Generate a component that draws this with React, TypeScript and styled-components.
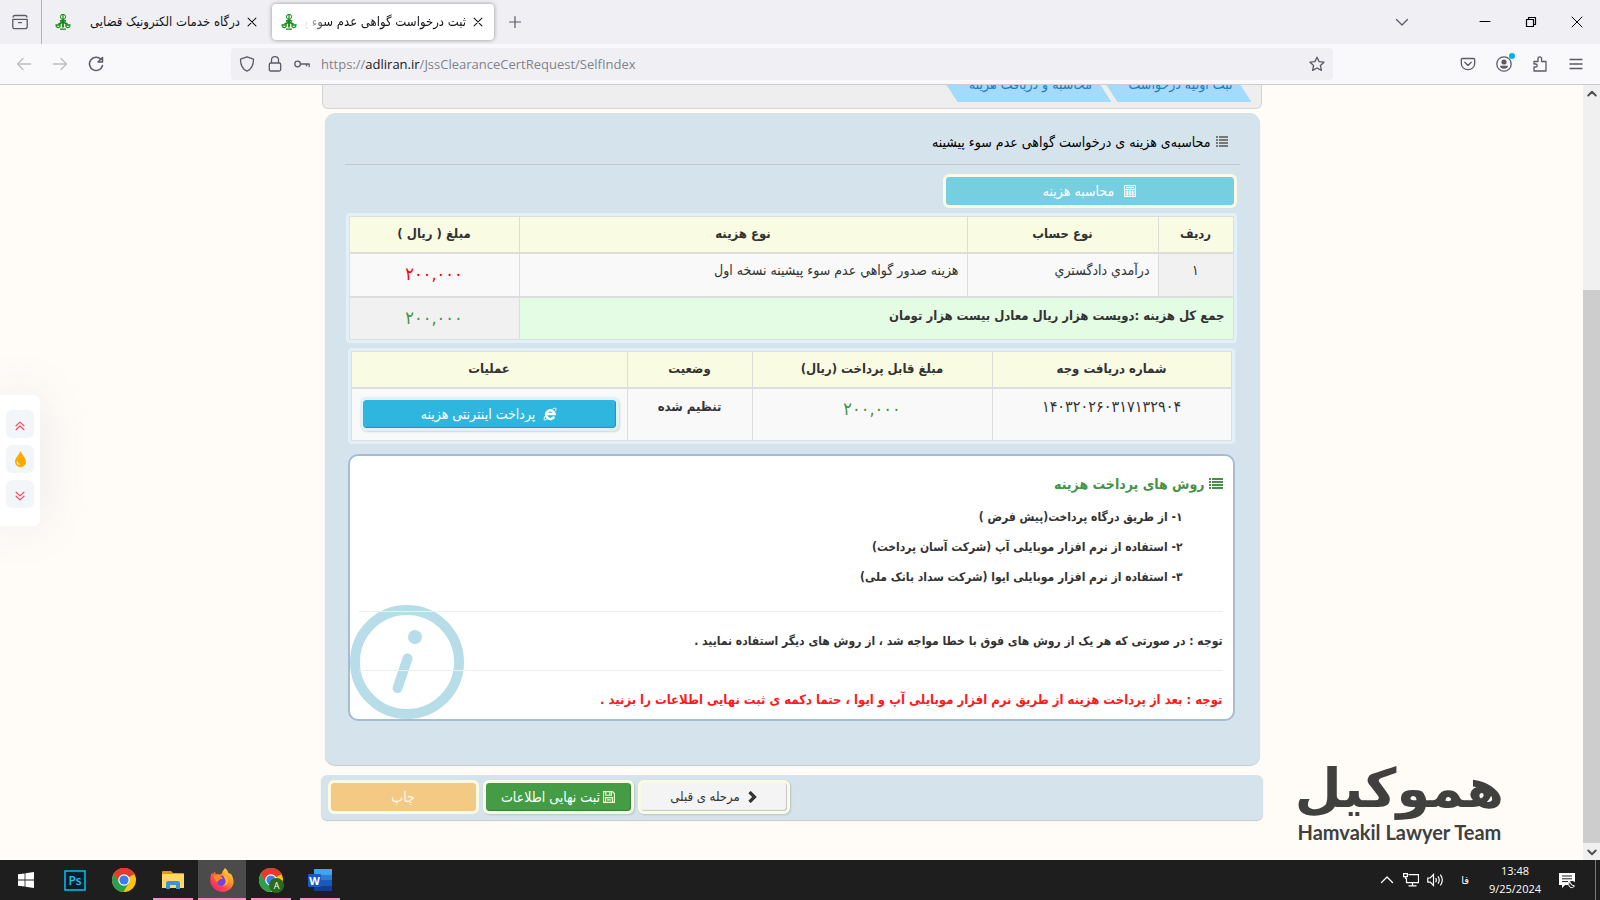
import React from "react";
import styled, { createGlobalStyle, css } from "styled-components";

const FA = `"DejaVu Sans Condensed", "DejaVu Sans", sans-serif`;
const UI = `"Open Sans", "Noto Sans", sans-serif`;

const Global = createGlobalStyle`
  *, *::before, *::after { box-sizing: border-box; }
  html, body { margin: 0; padding: 0; overflow: hidden; }
  body { font-family: ${FA}; color: #333; }
  button { font-family: inherit; cursor: pointer; }
  svg { display: block; flex: none; }
`;

const Screen = styled.div`
  display: flex;
  flex-direction: column;
  height: 100vh;
`;

/* Browser chrome */
const TabStrip = styled.header`
  display: flex;
  align-items: center;
  height: 44px;
  background: #f0f0f4;
  color: #15141a;
`;
const IconButton = styled.button<{ $w?: number; $dim?: boolean }>`
  display: flex;
  align-items: center;
  justify-content: center;
  width: ${(p) => p.$w ?? 36}px;
  height: 32px;
  padding: 0;
  border: 0;
  background: none;
  color: ${(p) => (p.$dim ? "#bdbdc2" : "#5b5b66")};
`;
const ViewCell = styled.div`
  display: flex;
  align-items: center;
  height: 44px;
  padding: 0 3px 0 2px;
  border-right: 1px solid #b4b4bb;
`;
const Tab = styled.div<{ $active?: boolean }>`
  display: flex;
  align-items: center;
  gap: 2px;
  width: 222px;
  height: 36px;
  margin-left: 4px;
  padding: 0 6px 0 9px;
  border-radius: 4px;
  ${(p) => p.$active && css`background: #fff; box-shadow: 0 0 4px rgba(0, 0, 0, 0.4);`}
`;
const TabTitle = styled.span<{ $fade?: boolean }>`
  flex: 1;
  min-width: 0;
  margin-left: 4px;
  overflow: hidden;
  white-space: nowrap;
  direction: rtl;
  font-size: 13px;
  line-height: 20px;
  ${(p) => p.$fade && css`mask-image: linear-gradient(to right, transparent, #000 24px);`}
`;
const CloseButton = styled(IconButton)`
  width: 20px;
  height: 20px;
  color: #15141a;
`;
const Spacer = styled.div<{ $w?: number }>`
  flex: ${(p) => (p.$w ? `0 0 ${p.$w}px` : "1")};
`;
const WindowButton = styled(IconButton)`
  width: 46px;
  color: #000;
`;
const NavBar = styled.div`
  display: flex;
  align-items: center;
  height: 41px;
  padding: 0 6px;
  background: #f9f9fb;
  border-bottom: 1px solid #cccccf;
`;
const UrlBox = styled.form`
  display: flex;
  align-items: center;
  flex: 1;
  height: 32px;
  margin: 0 117px;
  padding: 0 2px;
  border-radius: 4px;
  background: #f0f0f4;
`;
const UrlField = styled.label`
  display: grid;
  flex: 1;
  margin-left: 6px;
  font-family: ${UI};
  font-size: 13px;
  line-height: 24px;
  color: #82828a;
`;
const UrlText = styled.span`
  grid-area: 1 / 1;
  b { font-weight: 400; color: #15141a; }
`;
const UrlInput = styled.input`
  grid-area: 1 / 1;
  width: 100%;
  padding: 0;
  border: 0;
  outline: 0;
  background: none;
  font: inherit;
  color: transparent;
`;
const Badge = styled.span`
  position: relative;
  &::after {
    content: "";
    position: absolute;
    top: -3px;
    right: -3px;
    width: 6px;
    height: 6px;
    border-radius: 50%;
    background: #00b3f4;
  }
`;

/* Page */
const Viewport = styled.div`
  position: relative;
  display: flex;
  flex: 1;
  min-height: 0;
  background: #fffcf8;
`;
const Page = styled.main`
  flex: 1;
  min-width: 0;
  overflow: hidden;
  direction: rtl;
`;
const Wrap = styled.div`
  max-width: 942px;
  margin: 0 auto;
`;
const Steps = styled.nav`
  display: flex;
  align-items: flex-end;
  height: 24px;
  margin: 0 1px;
  padding: 0 9px 6px;
  overflow: hidden;
  border: 1px solid #d6d6d6;
  border-top: 0;
  border-radius: 0 0 6px 6px;
  background: #eee;
`;
const Step = styled.a<{ $wide?: boolean }>`
  flex: none;
  width: ${(p) => (p.$wide ? 176 : 156)}px;
  height: 34px;
  margin-left: -16px;
  padding-left: 14px;
  clip-path: polygon(0 0, calc(100% - 22px) 0, 100% 100%, 22px 100%);
  background: #a4dafd;
  color: #1c80bd;
  font-size: 14px;
  line-height: 32px;
  text-align: center;
  text-decoration: none;
`;
const Panel = styled.section`
  padding: 17px 20px 44px;
  margin: 4px 3px 10px 4px;
  border-radius: 10px;
  background: #d5e3ec;
  box-shadow: 0 1px 1px #c4cbd0;
`;
const PanelTitle = styled.h1`
  display: flex;
  align-items: center;
  gap: 5px;
  height: 35px;
  margin: 0 0 9px;
  padding: 0 12px 11px;
  border-bottom: 1px solid #c8c8c8;
  color: #000;
  font-size: 14px;
  font-weight: 400;
  line-height: 24px;
  svg { color: #777; }
`;
const Inner = styled.div`
  padding: 0 3px 0 2px;
`;
type Tone = "cyan" | "blue" | "orange" | "green" | "grey";
const tones: Record<Tone, [string, string, string]> = {
  cyan: ["#76cee1", "#fff", "#fafbe3"],
  blue: ["#2fb6de", "#fff", "#e2f0fa"],
  orange: ["#f3c983", "#fff9ec", "#fafbe3"],
  green: ["#449d44", "#fff", "#fafbe3"],
  grey: ["#f4f4f4", "#333", "#fafbe3"],
};
const ActionButton = styled.button<{ $tone: Tone; $w?: number; $raised?: boolean; $gap?: number }>`
  display: flex;
  align-items: center;
  justify-content: center;
  gap: ${(p) => p.$gap ?? 8}px;
  width: ${(p) => (p.$w ? p.$w + "px" : "100%")};
  height: 34px;
  padding: 0;
  border: 3px solid ${(p) => tones[p.$tone][2]};
  border-radius: 6px;
  background: ${(p) => tones[p.$tone][0]};
  background-clip: padding-box;
  color: ${(p) => tones[p.$tone][1]};
  font-size: ${(p) => (p.$tone === "grey" ? 13 : 14)}px;
  line-height: 20px;
  ${(p) => p.$raised && css`box-shadow: inset -1px -1px 1px rgba(0, 0, 0, 0.2), 1px 1px 2px rgba(0, 0, 0, 0.15);`}
`;
const TableFrame = styled.div<{ $inset?: boolean }>`
  margin: ${(p) => (p.$inset ? "5px 2px 0 1px" : "5px 0 0 -1px")};
  padding: 3px;
  border-radius: 4px;
  background: #e2f0fa;
`;
const Table = styled.table`
  width: 100%;
  border-collapse: collapse;
  table-layout: fixed;
`;
const Th = styled.th<{ $w?: number }>`
  width: ${(p) => (p.$w ? p.$w + "px" : "auto")};
  height: 36px;
  padding: 0 8px;
  border: 1px solid #ddd;
  border-bottom-width: 2px;
  background: #fafbe3;
  font-size: 13px;
  line-height: 20px;
`;
const Td = styled.td<{ $h: number; $align?: string; $bg?: string; $bold?: boolean; $top?: number }>`
  height: ${(p) => p.$h}px;
  padding: ${(p) => p.$top ?? 6}px 8px 0;
  border: 1px solid #ddd;
  border-bottom-width: ${(p) => (p.$h === 44 ? 2 : 1)}px;
  background: ${(p) => p.$bg ?? "#f9f9f9"};
  vertical-align: top;
  text-align: ${(p) => p.$align ?? "right"};
  font-size: ${(p) => (p.$bold ? 13 : 14)}px;
  font-weight: ${(p) => (p.$bold ? 700 : 400)};
  line-height: 20px;
`;
const Amount = styled.span<{ $red?: boolean }>`
  font-size: 18px;
  line-height: 28px;
  color: ${(p) => (p.$red ? "#f00" : "#449345")};
`;
const Receipt = styled.span`
  font-size: 16px;
  line-height: 24px;
`;
const InfoBox = styled.section`
  position: relative;
  height: 267px;
  margin: 10px 2px 0 1px;
  padding: 17px 10px 0 9px;
  border: 2px solid #a5bcd2;
  border-radius: 10px;
  background: #fff;
`;
const InfoMark = styled.svg`
  position: absolute;
  left: 0;
  bottom: 0;
`;
const InfoTitle = styled.h2`
  display: flex;
  align-items: center;
  gap: 4px;
  margin: 0 0 7px;
  font-size: 14px;
  line-height: 22px;
  color: #449345;
`;
const MethodList = styled.div`
  padding-right: 40px;
  margin-bottom: 19px;
  font-size: 12px;
  font-weight: 700;
  line-height: 30px;
`;
const Notice = styled.p<{ $red?: boolean }>`
  position: relative;
  margin: 0;
  padding-top: 18px;
  height: 59px;
  border-top: 1px solid #eee;
  font-size: ${(p) => (p.$red ? 13 : 12)}px;
  font-weight: 700;
  line-height: 22px;
  color: ${(p) => (p.$red ? "#fe1a1a" : "#333")};
`;
const Footer = styled.footer`
  display: flex;
  justify-content: flex-end;
  gap: 4px;
  padding: 5px 7px 6px;
  border-radius: 6px;
  background: #d5e3ec;
  box-shadow: 0 1px 1px #c4cbd0;
`;
const SideTools = styled.aside`
  position: absolute;
  left: 0;
  top: 310px;
  display: flex;
  flex-direction: column;
  gap: 7px;
  padding: 15px 6px 18px;
  border-radius: 0 6px 6px 0;
  background: #fff;
  box-shadow: 0 0 50px rgba(82, 63, 105, 0.12);
`;
const SideButton = styled.button`
  display: flex;
  align-items: center;
  justify-content: center;
  width: 28px;
  height: 28px;
  padding: 0;
  border: 0;
  border-radius: 6px;
  background: #f3f6f9;
  color: #f64e60;
`;
const Brand = styled.div`
  position: absolute;
  right: 96px;
  bottom: 18px;
  color: #40403f;
  text-align: center;
  white-space: nowrap;
`;
const BrandName = styled.div`
  font: 700 54px / 66px "DejaVu Sans", sans-serif;
`;
const BrandSub = styled.div`
  font: 700 20px / 20px Lato, sans-serif;
`;
const ScrollTrack = styled.div`
  display: flex;
  flex-direction: column;
  width: 17px;
  background: #f0f0f0;
`;
const ScrollArrow = styled.button`
  display: flex;
  align-items: center;
  justify-content: center;
  height: 17px;
  padding: 0;
  border: 0;
  background: #f0f0f0;
  color: #505050;
`;
const ScrollThumb = styled.div`
  flex: 1;
  margin-top: 188px;
  background: #cdcdcd;
`;

/* Taskbar */
const Taskbar = styled.footer`
  display: flex;
  height: 40px;
  padding-left: 2px;
  background: #1e1e1e;
  color: #fff;
  font-family: ${UI};
  font-size: 11px;
`;
const TaskButton = styled.button<{ $run?: boolean; $active?: boolean }>`
  display: flex;
  align-items: center;
  justify-content: center;
  width: ${(p) => (p.$active ? 48 : 40)}px;
  height: 40px;
  margin: 0 ${(p) => (p.$active ? 1 : 5)}px 0 ${(p) => (p.$active ? 0 : 4)}px;
  padding: 0;
  border: 0;
  border-bottom: 2px solid ${(p) => (p.$run || p.$active ? "#f991cc" : "transparent")};
  border-top: 2px solid transparent;
  background: ${(p) => (p.$active ? "#4b4b4b" : "none")};
`;
const Tray = styled.div`
  display: flex;
  align-items: center;
  color: #fff;
`;
const TrayButton = styled(IconButton)`
  width: 24px;
  color: #fff;
`;
const Language = styled.span`
  width: 36px;
  text-align: center;
  font-family: ${FA};
  font-size: 11px;
`;
const Clock = styled.time`
  width: 64px;
  margin-right: 8px;
  text-align: center;
  line-height: 18px;
`;
const ShowDesktop = styled.span`
  width: 5px;
  height: 40px;
  margin-left: 16px;
  border-left: 1px solid #777;
`;

type LineProps = { s?: number; sw?: number; d: string; fill?: string };
const Line = ({ s = 16, sw = 1.3, d, fill = "none" }: LineProps) => (
  <svg width={s} height={s} viewBox="0 0 16 16" fill={fill} stroke="currentColor" strokeWidth={sw} strokeLinecap="round" strokeLinejoin="round">
    <path d={d} />
  </svg>
);

const ListIcon = ({ w = 12 }: { w?: number }) => (
  <svg width={w} height="12" viewBox={`0 0 ${w} 12`} fill="currentColor" shapeRendering="crispEdges">
    {[0, 3, 6, 9].map((y) => (
      <React.Fragment key={y}>
        <rect x="0" y={y} width="2" height="2" />
        <rect x="3" y={y} width={w - 3} height="2" />
      </React.Fragment>
    ))}
  </svg>
);

const JusticeIcon = () => (
  <svg width="16" height="16" viewBox="0 0 16 16" fill="none" stroke="#128a12">
    <ellipse cx="8" cy="2.8" rx="2.6" ry="2.5" strokeWidth="1" />
    <path d="M8 .3v5" strokeWidth="1.2" />
    <path d="M8 5.3v8.2M5 7.2Q8 5.6 11 7.2M8 8 3.4 10.200M8 8l4.6 2.200" strokeWidth="1.8" />
    <path d="M.4 11h5.4M10.2 11h5.4M1 12q2.2 3.4 4.4 0M10.6 12q2.2 3.4 4.4 0M5 15.2h6" strokeWidth="1.3" />
  </svg>
);

const CalcIcon = () => (
  <svg width="12" height="12" viewBox="0 0 12 12" fill="none" stroke="currentColor">
    <path d="M.5.5h11v11H.5zM.5 4.5h11M.5 7h11M.5 9.2h11M3.2 4.5v7M6 4.5v7M8.8 4.5v7" />
    <path d="M2 2.5h8" strokeWidth="1.4" />
  </svg>
);

const ExplorerE = () => (
  <svg width="14" height="14" viewBox="0 0 14 14" fill="none" stroke="currentColor">
    <path d="M11.2 9.6A4.300 4.300 0 1 1 11.600 7H4.2" strokeWidth="2.5" />
    <path d="M2.6 8.6C-.2 12.6.6 14.2 4.6 11.6M9.4 2.2c3.4-2 4.4-1 3 2" strokeWidth="1" />
  </svg>
);

const SaveIcon = () => (
  <svg width="12" height="12" viewBox="0 0 12 12" fill="none" stroke="#fdfdcf" strokeWidth="1.1">
    <path d="M.6.6h8.8l2 2v8.8H.6zM2.8.8v3.4h5.6V.8M2.6 11.2V6.6h6.8v4.6M4 8.9h4M6.8 1.4v2" />
  </svg>
);

const Chrome = ({ user }: { user?: boolean }) => (
  <svg width="25" height="25" viewBox="0 0 25 25">
    <circle cx="12" cy="12" r="12" fill="#f9c513" />
    <path d="M12 12 1.6 6A12 12 0 0 1 22.4 6z" fill="#e33b2e" />
    <path d="M12 6.6h10.7A12 12 0 0 0 1.6 6l5.2 9z" fill="#e33b2e" />
    <path d="M1.6 6a12 12 0 0 0 9.8 18L17 14.6 7.2 14.8z" fill="#2d9f4c" />
    <circle cx="12" cy="12" r="5.8" fill="#fff" />
    <circle cx="12" cy="12" r="4.6" fill="#3b7ded" />
    {user && (
      <>
        <circle cx="17.5" cy="17.5" r="7.5" fill="#2d6a1f" />
        <text x="17.5" y="20.8" fontSize="9" fontFamily="Open Sans" textAnchor="middle" fill="#fff">A</text>
      </>
    )}
  </svg>
);

const Folder = () => (
  <svg width="22" height="18" viewBox="0 0 22 18">
    <path d="M0 1q0-1 1-1h8l2 2H21q1 0 1 1v5H0z" fill="#dd9a0c" />
    <path d="M0 3h22v14H0z" fill="#ffd868" />
    <path d="M4 18v-6q0-2 2-2h10q2 0 2 2v6h-4v-4H8v4z" fill="#3a94d9" />
  </svg>
);

const Firefox = () => (
  <svg width="24" height="24" viewBox="0 0 24 24">
    <defs>
      <linearGradient id="fox" x1="1" y1="0" x2="0.2" y2="1">
        <stop offset="0" stopColor="#fff04a" />
        <stop offset="0.4" stopColor="#ff9b28" />
        <stop offset="0.7" stopColor="#ff4a4a" />
        <stop offset="1" stopColor="#e8217f" />
      </linearGradient>
    </defs>
    <path d="M15 0c2 2 3 3 3.400 5 2 .5 2.600 1.400 2.800 1.200 2.400 4 3.600 9 .4 13.200A12 12 0 0 1 1 16C-.6 11.400.4 7.600 2.200 4.600l.6 1.800L5 3.600l.6 2.800q2-.8 4 0L12 5.800C12 3 14 2 15 0z" fill="url(#fox)" />
    <circle cx="12" cy="12.800" r="5.400" fill="#7a3ee0" />
    <path d="M3.600 8.400q4-2 8 .4l1.200 1.800-3.600 1.200-1.600 2.800Q5 13 3.600 8.400z" fill="#ff8a1e" />
    <path d="M13 7q5 1 5.400 6.400-1.600 5-7.400 4.600 5-1 4.600-5.600z" fill="#ffb52c" />
  </svg>
);

const Word = () => (
  <svg width="24" height="22" viewBox="0 0 24 22">
    <path d="M6 0h18v6H6z" fill="#41a5ee" />
    <path d="M6 6h18v5H6z" fill="#2b7cd3" />
    <path d="M6 11h18v6H6z" fill="#185abd" />
    <path d="M6 17h18v5H6z" fill="#103f91" />
    <rect y="5" width="13" height="13" rx="1" fill="#185abd" />
    <text x="6.500" y="15.500" fontSize="11" fontWeight="700" fontFamily="Open Sans" textAnchor="middle" fill="#fff">W</text>
  </svg>
);

const Ps = () => (
  <svg width="22" height="21" viewBox="0 0 22 21">
    <rect x="1" y="1" width="20" height="19" fill="#061e2b" stroke="#00c2f5" strokeWidth="1.500" />
    <text x="11" y="15" fontSize="12" fontWeight="600" fontFamily="Open Sans" textAnchor="middle" fill="#1fc5f2">Ps</text>
  </svg>
);

const CLOSE = "M3.500 3.500l9 9M12.500 3.500l-9 9";

export default function App() {
  return (
    <Screen>
      <Global />
      <TabStrip>
        <ViewCell>
          <IconButton aria-label="Firefox View">
            <Line d="M.8 5.300h14.400v7.400q0 2-2 2H2.800q-2 0-2-2zM2.800 1.500h10.400q1.500 0 1.800 1.600M2.800 1.500Q1.200 1.500 1 3.100M6.500 8.600h3" />
          </IconButton>
        </ViewCell>
        <Tab>
          <JusticeIcon />
          <TabTitle>درگاه خدمات الکترونیک قضایی</TabTitle>
          <CloseButton aria-label="Close tab"><Line s={14} sw={1.2} d={CLOSE} /></CloseButton>
        </Tab>
        <Tab $active>
          <JusticeIcon />
          <TabTitle $fade>ثبت درخواست گواهی عدم سوء پیشینه</TabTitle>
          <CloseButton aria-label="Close tab"><Line s={14} sw={1.2} d={CLOSE} /></CloseButton>
        </Tab>
        <IconButton aria-label="New tab" $w={42}><Line sw={1.2} d="M8 2.500v11M2.500 8h11" /></IconButton>
        <Spacer />
        <IconButton aria-label="List all tabs" $w={40}><Line sw={1.3} d="M2.500 5.500 8 11l5.500-5.500" /></IconButton>
        <Spacer $w={40} />
        <WindowButton aria-label="Minimize"><Line sw={1} d="M3 7.500h10" /></WindowButton>
        <WindowButton aria-label="Restore"><Line sw={1.2} d="M3.500 5.500h7v7h-7zM5.500 5.500v-2h7v7h-2" /></WindowButton>
        <WindowButton aria-label="Close"><Line sw={1} d="M3 3l10 10M13 3 3 13" /></WindowButton>
      </TabStrip>
      <NavBar>
        <IconButton aria-label="Back" $dim><Line d="M1.500 8h13M7 2.500 1.500 8 7 13.500" /></IconButton>
        <IconButton aria-label="Forward" $dim><Line d="M1.500 8h13M9 2.500 14.500 8 9 13.500" /></IconButton>
        <IconButton aria-label="Reload">
          <Line sw={1.5} d="M14.500 9.500A6.600 6.600 0 1 1 13 3.500M14.500 1.500v4.500h-4.500z" />
        </IconButton>
        <UrlBox>
          <IconButton type="button" aria-label="Tracking protection" $w={28}><Line d="M8 .8 1.500 3.200c0 5.500 1.500 9.800 6.500 12 5-2.200 6.500-6.500 6.500-12z" /></IconButton>
          <IconButton type="button" aria-label="Connection secure" $w={28}><Line d="M3.800 7h8.400q1.500 0 1.500 1.500v5q0 1.500-1.500 1.500H3.800q-1.500 0-1.500-1.500v-5Q2.300 7 3.800 7zM4.500 7V4q0-3.300 3.500-3.300T11.500 4v3" /></IconButton>
          <IconButton type="button" aria-label="Saved password" $w={26}><Line d="M.8 8a2.800 2.800 0 1 0 5.600 0A2.800 2.800 0 1 0 .8 8M6.400 8h8.800v2.500M12.500 8v1.800" /></IconButton>
          <UrlField>
            <UrlText aria-hidden="true">https://<b>adliran.ir</b>/JssClearanceCertRequest/SelfIndex</UrlText>
            <UrlInput aria-label="Address" />
          </UrlField>
          <IconButton type="button" aria-label="Bookmark" $w={28}><Line d="M8 1.200l2.100 4.400 4.900.6-3.600 3.300 1 4.900L8 12l-4.400 2.400 1-4.900L1 6.200l4.900-.6z" /></IconButton>
        </UrlBox>
        <IconButton aria-label="Pocket"><Line d="M2.500 2.500h11q1.200 0 1.200 1.200V7.500a6.700 6.200 0 0 1-13.400 0V3.700q0-1.200 1.200-1.200zM4.800 6.300 8 9.500l3.200-3.200" /></IconButton>
        <IconButton aria-label="Account">
          <Badge>
            <svg width="16" height="16" viewBox="0 0 16 16" fill="currentColor">
              <circle cx="8" cy="8" r="7.200" fill="none" stroke="currentColor" strokeWidth="1.300" />
              <circle cx="8" cy="6" r="2.600" />
              <path d="M3.800 9.800h8.400q-.8 3-4.200 3t-4.200-3z" />
            </svg>
          </Badge>
        </IconButton>
        <IconButton aria-label="Extensions"><Line d="M2 5.500h4V2.800q0-2 1.800-2t1.800 2v2.700h4.400v9.500H2v-4h1.500q1.700 0 1.700-1.500T3.500 8H2z" /></IconButton>
        <IconButton aria-label="Menu"><Line d="M2 3.500h12M2 8h12M2 12.500h12" /></IconButton>
      </NavBar>

      <Viewport>
        <Page>
          <Wrap>
            <Steps>
              <Step href="#request">ثبت اولیه درخواست</Step>
              <Step href="#cost" $wide>محاسبه و دریافت هزینه</Step>
            </Steps>
            <Panel>
              <PanelTitle><ListIcon />محاسبه‌ی هزینه ی درخواست گواهی عدم سوء پیشینه</PanelTitle>
              <Inner>
                <ActionButton $tone="cyan" $w={294} $gap={10}><CalcIcon />محاسبه هزینه</ActionButton>
                <TableFrame>
                  <Table>
                    <thead>
                      <tr>
                        <Th $w={75}>ردیف</Th>
                        <Th $w={191}>نوع حساب</Th>
                        <Th>نوع هزینه</Th>
                        <Th $w={170}>مبلغ ( ریال )</Th>
                      </tr>
                    </thead>
                    <tbody>
                      <tr>
                        <Td $h={44} $align="center" $bg="#f1f1f1">۱</Td>
                        <Td $h={44}>درآمدي دادگستري</Td>
                        <Td $h={44}>هزینه صدور گواهي عدم سوء پیشینه نسخه اول</Td>
                        <Td $h={44} $align="center"><Amount $red>۲۰۰,۰۰۰</Amount></Td>
                      </tr>
                      <tr>
                        <Td $h={43} $top={8} colSpan={3} $bg="#e3fce3" $bold>جمع کل هزینه :دویست هزار ریال معادل بیست هزار تومان</Td>
                        <Td $h={43} $align="center" $bg="#f1f1f1"><Amount>۲۰۰,۰۰۰</Amount></Td>
                      </tr>
                    </tbody>
                  </Table>
                </TableFrame>
                <TableFrame $inset>
                  <Table>
                    <thead>
                      <tr>
                        <Th $w={239}>شماره دریافت وجه</Th>
                        <Th $w={240}>مبلغ قابل پرداخت (ریال)</Th>
                        <Th $w={125}>وضعیت</Th>
                        <Th>عملیات</Th>
                      </tr>
                    </thead>
                    <tbody>
                      <tr>
                        <Td $h={53} $align="center"><Receipt>۱۴۰۳۲۰۲۶۰۳۱۷۱۳۲۹۰۴</Receipt></Td>
                        <Td $h={53} $align="center"><Amount>۲۰۰,۰۰۰</Amount></Td>
                        <Td $h={53} $top={8} $align="center" $bold>تنظیم شده</Td>
                        <Td $h={53} $top={8}><ActionButton $tone="blue" $raised><ExplorerE />پرداخت اینترنتی هزینه</ActionButton></Td>
                      </tr>
                    </tbody>
                  </Table>
                </TableFrame>
                <InfoBox>
                  <InfoMark width="114" height="114" viewBox="0 0 114 114" fill="none" stroke="#b7dde8" strokeLinecap="round">
                    <circle cx="57" cy="57" r="52" strokeWidth="10" />
                    <circle cx="65" cy="32" r="7" fill="#b7dde8" stroke="none" />
                    <path d="M57.500 53.500 47.500 83" strokeWidth="10" />
                  </InfoMark>
                  <InfoTitle><ListIcon w={14} />روش های پرداخت هزینه</InfoTitle>
                  <MethodList>
                    <div>۱- از طریق درگاه پرداخت(پیش فرض )</div>
                    <div>۲- استفاده از نرم افزار موبایلی آپ (شرکت آسان پرداخت)</div>
                    <div>۳- استفاده از نرم افزار موبایلی ایوا (شرکت سداد بانک ملی)</div>
                  </MethodList>
                  <Notice>توجه : در صورتی که هر یک از روش های فوق با خطا مواجه شد ، از روش های دیگر استفاده نمایید .</Notice>
                  <Notice $red>توجه : بعد از پرداخت هزینه از طریق نرم افزار موبایلی آپ و ایوا ، حتما دکمه ی ثبت نهایی اطلاعات را بزنید .</Notice>
                </InfoBox>
              </Inner>
            </Panel>
            <Footer>
              <ActionButton $tone="grey" $w={152} $raised>
                <svg width="9" height="12" viewBox="0 0 9 12" fill="none" stroke="currentColor" strokeWidth="3.200"><path d="M1.500 1 6.500 6l-5 5" /></svg>
                مرحله ی قبلی
              </ActionButton>
              <ActionButton $tone="green" $w={151} $gap={3} $raised><SaveIcon />ثبت نهایی اطلاعات</ActionButton>
              <ActionButton $tone="orange" $w={151}>چاپ</ActionButton>
            </Footer>
          </Wrap>
        </Page>
        <ScrollTrack>
          <ScrollArrow aria-label="Scroll up"><Line s={12} sw={2.6} d="M3 10l5-5 5 5" /></ScrollArrow>
          <ScrollThumb />
          <ScrollArrow aria-label="Scroll down"><Line s={12} sw={2.6} d="M3 6l5 5 5-5" /></ScrollArrow>
        </ScrollTrack>
        <SideTools>
          <SideButton aria-label="Top"><Line s={14} sw={1.4} d="M3.500 10 8 5.800 12.500 10M3.500 14.500 8 10.300l4.500 4.200" /></SideButton>
          <SideButton aria-label="Theme">
            <svg width="11" height="16" viewBox="0 0 11 16">
              <path d="M5.500 0C7 4 11 7 11 10.500a5.500 5.500 0 0 1-11 0C0 7 4 4 5.500 0z" fill="#ffa800" />
              <path d="M2 10.500q.3 2.500 2.500 3" fill="none" stroke="#fff" strokeWidth="1.200" />
            </svg>
          </SideButton>
          <SideButton aria-label="Bottom"><Line s={14} sw={1.4} d="M3.500 6 8 10.200 12.500 6M3.500 10.500 8 14.700l4.500-4.200" /></SideButton>
        </SideTools>
        <Brand>
          <BrandName dir="rtl">هموکیل</BrandName>
          <BrandSub>Hamvakil Lawyer Team</BrandSub>
        </Brand>
      </Viewport>

      <Taskbar>
        <TaskButton aria-label="Start">
          <svg width="16" height="16" viewBox="0 0 16 16" fill="#fff"><path d="M0 2.300 6.600 1.400v6.200H0zM7.400 1.300 16 0v7.600H7.400zM0 8.400h6.600v6.200L0 13.700zM7.400 8.400H16V16l-8.600-1.300z" /></svg>
        </TaskButton>
        <TaskButton aria-label="Photoshop"><Ps /></TaskButton>
        <TaskButton aria-label="Chrome"><Chrome /></TaskButton>
        <TaskButton aria-label="File Explorer" $run><Folder /></TaskButton>
        <TaskButton aria-label="Firefox" $active><Firefox /></TaskButton>
        <TaskButton aria-label="Chrome profile" $run><Chrome user /></TaskButton>
        <TaskButton aria-label="Word" $run><Word /></TaskButton>
        <Spacer />
        <Tray>
          <TrayButton aria-label="Hidden icons"><Line sw={1.3} d="M2.500 10.500 8 5l5.500 5.500" /></TrayButton>
          <TrayButton aria-label="Network">
            <svg width="16" height="14" viewBox="0 0 16 14" fill="none" stroke="currentColor" strokeWidth="1.200"><path d="M5.500 1.600h10v8H3.500V5.500M9.500 9.600v3.200M5.500 12.900h8M.6.6h3.800v3H.6zM2.500 3.600v1.800h1" /></svg>
          </TrayButton>
          <TrayButton aria-label="Volume">
            <svg width="17" height="14" viewBox="0 0 17 14" fill="none" stroke="currentColor" strokeWidth="1.200"><path d="M.8 5v4.200h2.400L6.500 12.500v-11L3.200 5zM8.700 5q1.200 2 0 4.200M11 3.300q2.400 3.700 0 7.400M13.400 1.600q3.800 5.400 0 10.800" /></svg>
          </TrayButton>
          <Language lang="fa">فا</Language>
          <Clock>13:48<br />9/25/2024</Clock>
          <TrayButton aria-label="Notifications">
            <svg width="17" height="17" viewBox="0 0 17 17"><path d="M0 1h16v12H6l-3 3v-3H0z" fill="#fff" /><path d="M3 4h10M3 6.800h10M3 9.600h6" stroke="#1e1e1e" /><circle cx="13" cy="12.500" r="3.600" fill="#1e1e1e" /><path d="M11 10.200a3 3 0 1 0 4.500 3.600Q12 14 11 10.200z" fill="none" stroke="#fff" /></svg>
          </TrayButton>
          <ShowDesktop />
        </Tray>
      </Taskbar>
    </Screen>
  );
}
